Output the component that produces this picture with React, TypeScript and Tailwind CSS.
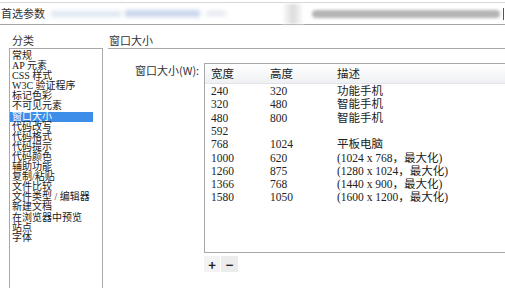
import React from 'react';

const categories = [
  '常规',
  'AP 元素',
  'CSS 样式',
  'W3C 验证程序',
  '标记色彩',
  '不可见元素',
  '窗口大小',
  '代码改写',
  '代码格式',
  '代码提示',
  '代码颜色',
  '辅助功能',
  '复制/粘贴',
  '文件比较',
  '文件类型 / 编辑器',
  '新建文档',
  '在浏览器中预览',
  '站点',
  '字体',
];

const sizes = [
  ['240', '320', '功能手机'],
  ['320', '480', '智能手机'],
  ['480', '800', '智能手机'],
  ['592', '', ''],
  ['768', '1024', '平板电脑'],
  ['1000', '620', '(1024 x 768，最大化)'],
  ['1260', '875', '(1280 x 1024，最大化)'],
  ['1366', '768', '(1440 x 900，最大化)'],
  ['1580', '1050', '(1600 x 1200，最大化)'],
];

const serif = "font-['Liberation_Serif','Noto_Sans_CJK_SC',serif]";

export default function App() {
  return (
    <div className="w-[505px] h-[288px] overflow-hidden bg-white text-[#1a1a1a] font-['Noto_Sans_CJK_SC',sans-serif]">
      {/* Title bar */}
      <div className="mt-[2px] border-t border-[#d6d6d6]">
        <div className="h-[22px] flex items-center border-b border-[#a4a4a4]">
          <span className="pl-[1px] text-[11px] leading-none text-[#333]">首选参数</span>
          {/* blurred window chrome */}
          <div className="ml-[6px] h-[6px] w-[70px] bg-[#dfe6f2] blur-[2px]" />
          <div className="ml-[4px] h-[7px] w-[75px] bg-[#c9d5ec] blur-[2px]" />
          <div className="ml-[6px] h-[5px] w-[20px] bg-[#e3e8f1] blur-[2px]" />
          <div className="ml-[56px] h-[20px] w-[22px] bg-gradient-to-r from-white via-[#dcdcdc] to-white blur-[1px]" />
          <div className="ml-[8px] h-[8px] w-[188px] rounded-full bg-[#b5b5b5] blur-[1.5px]" />
          <div className="ml-[3px] h-[12px] w-[1px] bg-[#555]" />
        </div>
      </div>

      <div className="flex">
        {/* Category column */}
        <div className="w-[103px] pl-[9px] pt-[9px] shrink-0">
          <div className="pl-[3px] text-[11px] leading-[12px] text-[#333]">分类</div>
          <div className="mt-[2px] h-[260px] w-[94px] border border-[#a8a8a8] pt-[2px]">
            {categories.map((c) => (
              <div
                key={c}
                className={`${serif} text-[10px] leading-[10.1px] h-[10.1px] pl-[2px] whitespace-pre ${
                  c === '窗口大小' ? 'bg-[#3d8ee8] text-white w-[83px]' : ''
                }`}
              >
                {c}
              </div>
            ))}
          </div>
        </div>

        {/* Panel */}
        <div className="flex-1 pl-[5px] pt-[9px]">
          <div className="pl-[1px] pb-[2px] text-[11px] leading-[12px] text-[#333] border-b border-[#a8a8a8]">
            窗口大小
          </div>
          <div className="flex mt-[14px]">
            <div className="w-[96px] pl-[27px] pt-[1px] shrink-0 text-[11px] leading-[12px] text-[#333] whitespace-nowrap">
              窗口大小(W):
            </div>
            <div>
              <div className="w-[320px] h-[190px] border-l border-t border-b border-[#a8a8a8] overflow-hidden">
                <div className="flex h-[20px] items-center bg-gradient-to-b from-white to-[#eef0f3] border-b border-[#e2e4e8] text-[11.5px] text-[#222]">
                  <div className="w-[65px] pl-[6px]">宽度</div>
                  <div className="w-[67px]">高度</div>
                  <div>描述</div>
                </div>
                <div className="pt-[1px]">
                  {sizes.map(([w, h, d]) => (
                    <div key={w} className={`${serif} flex h-[13.3px] items-center text-[11.5px] text-[#222] whitespace-pre`}>
                      <div className="w-[65px] pl-[6px]">{w}</div>
                      <div className="w-[67px]">{h}</div>
                      <div>{d}</div>
                    </div>
                  ))}
                </div>
              </div>
              <div className="flex mt-[3px] gap-[1px]">
                <div className="w-[16px] h-[16px] flex items-center justify-center bg-[#f3f3f3] text-[13px] font-bold leading-none text-[#222]">+</div>
                <div className="w-[17px] h-[16px] flex items-center justify-center bg-[#ececec] text-[13px] font-bold leading-none text-[#222]">−</div>
              </div>
            </div>
          </div>
        </div>
      </div>
    </div>
  );
}
